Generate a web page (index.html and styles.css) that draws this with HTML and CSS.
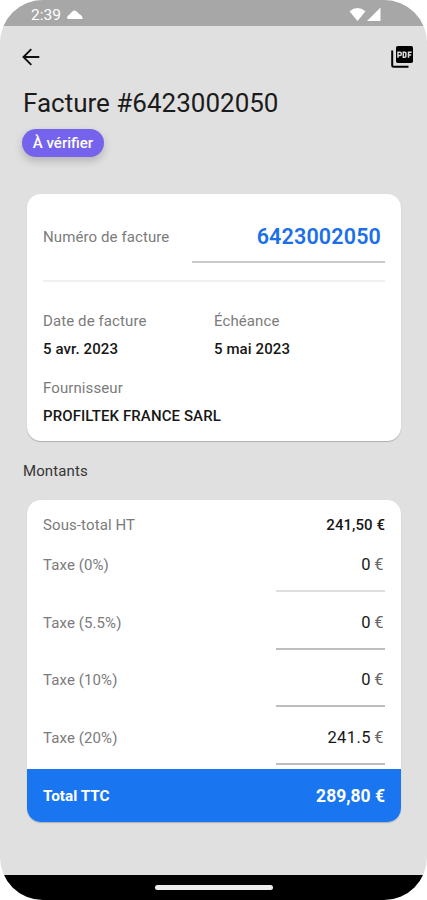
FILE: index.html
```html
<!DOCTYPE html>
<html lang="fr">
<head>
<meta charset="utf-8">
<title>Facture #6423002050</title>
<link rel="stylesheet" href="styles.css">
</head>
<body>
<div class="screen">
  <header class="status">
    <span class="clock">2:39</span>
    <svg class="cloud" width="16" height="10" viewBox="0 0 16 10"><path d="M1.500 9C.5 9 .2 8.300.2 7.400c0-1.400 1-2.200 2-2.600L5.400 1.400Q7.200-.3 9.300 1.300l3.200 3c1.800.8 3 2.200 3.200 4.700z" fill="#fff"/></svg>
    <svg class="signals" width="33" height="15" viewBox="0 0 33 15"><path d="M.5 4.200Q8.500-2.200 16.500 4.200L8.500 14zM31.500.5V14H18z" fill="#fff"/></svg>
  </header>
  <nav class="toolbar">
    <svg width="18" height="18" viewBox="0 0 18 18" fill="none" stroke="#111" stroke-width="1.900"><path d="M17.300 9H2M9.300 1.200 1.500 9l7.800 7.800"/></svg>
    <svg width="22" height="22" viewBox="0 0 22 22"><path d="M1.200 4.500v14.800q0 1.500 1.500 1.500h14.800" fill="none" stroke="#000" stroke-width="2"/><rect x="5" y="0" width="17" height="17" rx="1.800"/><path d="M7 11.800V6.200h2.200q1 0 1 1v1.200q0 1-1 1H7M12.300 6.200v5h1.600q1 0 1-1V7.200q0-1-1-1zM17.500 11.800V6.200h3.200M17.500 9h2.700" fill="none" stroke="#ddd" stroke-width="1.500"/></svg>
  </nav>
  <main>
    <h1 class="title">Facture #6423002050</h1>
    <span class="chip">À vérifier</span>
    <section class="card details">
      <div class="number">
        <span class="label">Numéro de facture</span>
        <span class="number-input">6423002050</span>
      </div>
      <div class="facts">
        <div><div class="label">Date de facture</div><div class="value">5 avr. 2023</div></div>
        <div><div class="label">Échéance</div><div class="value">5 mai 2023</div></div>
        <div class="supplier"><div class="label">Fournisseur</div><div class="value name">PROFILTEK FRANCE SARL</div></div>
      </div>
    </section>
    <h2 class="subtitle">Montants</h2>
    <section class="card amounts">
      <div class="subtotal"><span class="label">Sous-total HT</span><span class="value">241,50 €</span></div>
      <div class="tax"><span class="label">Taxe (0%)</span><span class="field soft">0 <i>€</i></span></div>
      <div class="tax"><span class="label">Taxe (5.5%)</span><span class="field">0 <i>€</i></span></div>
      <div class="tax"><span class="label">Taxe (10%)</span><span class="field">0 <i>€</i></span></div>
      <div class="tax"><span class="label">Taxe (20%)</span><span class="field">241.5 <i>€</i></span></div>
      <div class="total"><span>Total TTC</span><span class="grand">289,80 €</span></div>
    </section>
  </main>
  <footer class="navbar"><div class="pill"></div></footer>
</div>
</body>
</html>
```

FILE: styles.css
```css
* { box-sizing: border-box; }
body { margin: 0; background: #fff; font-family: Roboto, "Liberation Sans", sans-serif; }
svg { display: block; }
.screen { width: 427px; height: 900px; display: flex; flex-direction: column; overflow: hidden; border-radius: 43px; background: #e0e0e0; }
.status { height: 26px; flex: none; background: #a7a7a7; display: flex; align-items: center; padding: 3px 45px 0 31px; color: #fff; }
.clock { font-size: 15.500px; line-height: 20px; width: 36px; }
.signals { margin-left: auto; }
.toolbar { height: 62px; flex: none; display: flex; justify-content: space-between; align-items: center; padding: 0 14px 0 22px; }
main { flex: 1; padding: 0 26px 0 27px; }
.title { margin: 0 0 0 -4px; font-size: 26px; font-weight: 400; line-height: 30px; color: #1b1b1b; white-space: nowrap; }
.chip { display: block; width: 82px; height: 28px; margin: 11px 0 0 -5px; border-radius: 14px; background: #7563ed; color: #fff; font-size: 15px; font-weight: 500; line-height: 28px; text-align: center; box-shadow: 0 4px 8px rgba(0,0,0,.2); }
.card { background: #fff; border-radius: 14px; box-shadow: 0 1px 1px rgba(0,0,0,.22); overflow: hidden; }
.details { height: 247px; margin-top: 37px; padding: 0 16px; }
.number { height: 88px; border-bottom: 2px solid #f0f0f0; display: flex; justify-content: space-between; }
.label { font-size: 15px; line-height: 20px; letter-spacing: .1px; color: #7b7b7b; }
.number .label { margin-top: 33px; }
.number-input { width: 193px; height: 69px; padding: 29px 4px 0 0; border-bottom: 2px solid #c9c9c9; font-size: 21.500px; line-height: 28px; font-weight: 600; letter-spacing: .15px; color: #1b6fe8; text-align: right; }
.facts { display: grid; grid-template-columns: 1fr 1fr; padding-top: 29px; }
.value { font-size: 15px; line-height: 20px; font-weight: 500; letter-spacing: .1px; color: #171717; }
.facts .value { margin-top: 8px; }
.supplier { grid-column: 1 / -1; margin-top: 19px; }
.subtitle { margin: 20px 0 0 -4px; font-size: 15px; line-height: 20px; font-weight: 400; letter-spacing: .1px; color: #353535; }
.amounts { height: 322px; margin-top: 19px; display: flex; flex-direction: column; }
.subtotal { display: flex; justify-content: space-between; padding: 15px 16px 0; height: 35px; flex: none; }
.subtotal .value { letter-spacing: .05px; }
.tax { display: flex; justify-content: space-between; padding: 0 16px; height: 57.500px; flex: none; }
.tax .label { margin-top: 20px; }
.field { width: 109px; height: 57px; padding: 18px 1px 0 0; border-bottom: 2px solid #bdbdbd; font-size: 16.500px; line-height: 24px; letter-spacing: .4px; word-spacing: -1px; color: #171717; text-align: right; }
.field.soft { border-color: #dedede; }
.field i { font-style: normal; color: #666; }
.total { flex: 1; margin-top: 4px; padding: 0 16px; display: flex; align-items: center; justify-content: space-between; background: #1976f0; color: #fff; font-size: 15.300px; font-weight: 700; }
.grand { font-size: 17.500px; }
.navbar { height: 25px; flex: none; background: #000; display: flex; justify-content: center; align-items: center; }
.pill { width: 118px; height: 5px; border-radius: 3px; background: #ededed; }
```
